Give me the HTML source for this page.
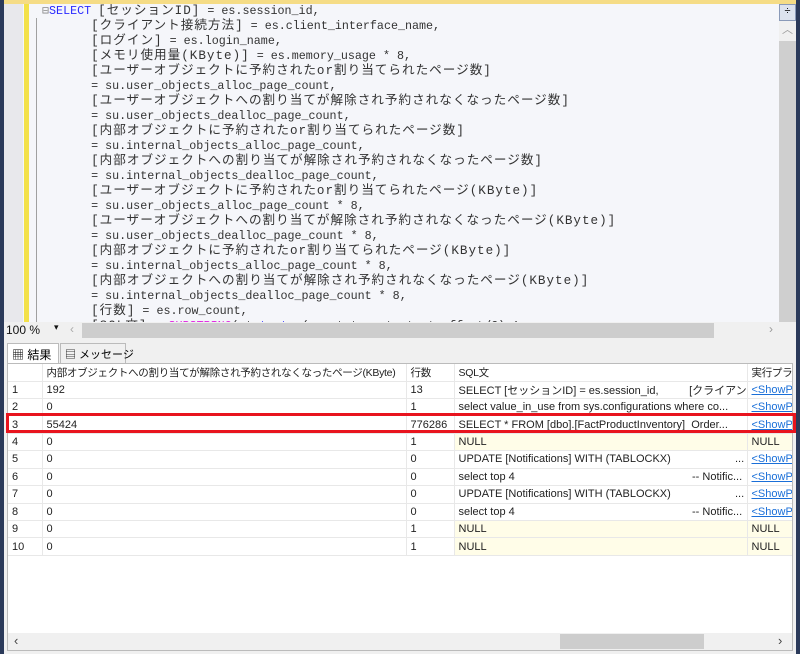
<!DOCTYPE html>
<html><head><meta charset="utf-8"><style>
*{margin:0;padding:0;box-sizing:border-box}
body{width:800px;height:654px;overflow:hidden;background:#2b3a5a;position:relative;font-family:"Liberation Sans","Noto Sans CJK JP",sans-serif}
.ed{position:absolute;left:4px;top:0;width:792px;height:322px;background:#f5f6fa;border-top:4px solid #f5dc86;overflow:hidden}
.gut{position:absolute;left:0;top:0;width:19px;height:318px;background:#e8e8ec}
.ybar{position:absolute;left:20px;top:0;width:5px;height:318px;background:#f3e14a}
.vl{position:absolute;left:32px;top:14px;width:1px;height:304px;background:#a0a0a0}
.code{position:absolute;left:38px;top:0px;font-family:"Liberation Mono","Noto Sans CJK JP",monospace;font-size:11.7px;line-height:15px;color:#333;white-space:pre}
.ln{display:block;height:15px;line-height:15px;overflow:visible}
.j{display:inline-block;height:15px;line-height:15px;vertical-align:top;font-size:12.6px;letter-spacing:1px}
.kw{color:#2a2aff}.fn{color:#e020e0}
.vs{position:absolute;left:775px;top:0;width:17px;height:318px;background:#cfcfcf}
.zoom{position:absolute;left:4px;top:322px;width:792px;height:17px;background:#f0f0f0;font-size:12px;color:#111}
.res{position:absolute;left:4px;top:339px;width:792px;height:315px;background:#f0f0f0}
.tab{position:absolute;top:4px;height:20px;font-size:12px;padding:2px 4px;border:1px solid #bbb;border-bottom:none;background:#fff;white-space:nowrap}
.grid{position:absolute;left:3px;top:24px;width:786px;height:288px;background:#fff;border:1px solid #bbb;overflow:hidden}
table{border-collapse:collapse;font-size:11px;color:#222;table-layout:fixed;position:absolute;left:0;top:0;width:784px}
td{height:17.45px;border-right:1px solid #e8e8e8;border-bottom:1px solid #e8e8e8;padding:0 4px;white-space:nowrap;overflow:hidden}
tr.h td{height:17px;font-size:10.5px;letter-spacing:-0.3px}
.y{background:#fffde8}
.lk{color:#1a6fd8;text-decoration:underline}
.red{position:absolute;left:6px;top:413px;width:790px;height:20px;border:3px solid #e8141e}
</style></head><body>
<div class="ed">
<div class="gut"></div><div class="ybar"></div><div class="vl"></div>
<div class="code"><span class="ln"><span style="color:#888">⊟</span><span class="kw">SELECT</span> <span class="j">[セッションID]</span> = es.session_id,</span><span class="ln">       <span class="j">[クライアント接続方法]</span> = es.client_interface_name,</span><span class="ln">       <span class="j">[ログイン]</span> = es.login_name,</span><span class="ln">       <span class="j">[メモリ使用量(KByte)]</span> = es.memory_usage * 8,</span><span class="ln">       <span class="j">[ユーザーオブジェクトに予約されたor割り当てられたページ数]</span></span><span class="ln">       = su.user_objects_alloc_page_count,</span><span class="ln">       <span class="j">[ユーザーオブジェクトへの割り当てが解除され予約されなくなったページ数]</span></span><span class="ln">       = su.user_objects_dealloc_page_count,</span><span class="ln">       <span class="j">[内部オブジェクトに予約されたor割り当てられたページ数]</span></span><span class="ln">       = su.internal_objects_alloc_page_count,</span><span class="ln">       <span class="j">[内部オブジェクトへの割り当てが解除され予約されなくなったページ数]</span></span><span class="ln">       = su.internal_objects_dealloc_page_count,</span><span class="ln">       <span class="j">[ユーザーオブジェクトに予約されたor割り当てられたページ(KByte)]</span></span><span class="ln">       = su.user_objects_alloc_page_count * 8,</span><span class="ln">       <span class="j">[ユーザーオブジェクトへの割り当てが解除され予約されなくなったページ(KByte)]</span></span><span class="ln">       = su.user_objects_dealloc_page_count * 8,</span><span class="ln">       <span class="j">[内部オブジェクトに予約されたor割り当てられたページ(KByte)]</span></span><span class="ln">       = su.internal_objects_alloc_page_count * 8,</span><span class="ln">       <span class="j">[内部オブジェクトへの割り当てが解除され予約されなくなったページ(KByte)]</span></span><span class="ln">       = su.internal_objects_dealloc_page_count * 8,</span><span class="ln">       <span class="j">[行数]</span> = es.row_count,</span><span class="ln">       <span class="j">[SQL文]</span> = <span class="fn">SUBSTRING</span>(st.<span class="kw">text</span>, (qs.statement_start_offset/2)+1</span></div>
<div class="vs"><div style="height:17px;background:#dde3ee;border:1px solid #8a9ab8;font-size:11px;text-align:center">÷</div><div style="height:20px;background:#f0f0f0;color:#999;text-align:center;font-size:11px">︿</div></div>
</div>
<div class="zoom"><span style="position:absolute;left:2px;top:1px">100 %</span><span style="position:absolute;left:50px;top:0;font-size:9px">▾</span><span style="position:absolute;left:66px;top:0;color:#aaa">‹</span><div style="position:absolute;left:78px;top:1px;width:632px;height:15px;background:#cdcdcd"></div><span style="position:absolute;left:765px;top:0;color:#999">›</span></div>
<div class="res">
<div class="tab" style="left:3px;width:52px">▦ 結果</div>
<div class="tab" style="left:56px;width:66px;background:#f0f0f0;font-size:11px">▤ メッセージ</div>
<div class="grid">
<table>
<colgroup><col style="width:34px"><col style="width:364px"><col style="width:48px"><col style="width:293px"><col style="width:45px"></colgroup>
<tr class="h"><td></td><td>内部オブジェクトへの割り当てが解除され予約されなくなったページ(KByte)</td><td>行数</td><td>SQL文</td><td>実行プラン</td></tr>
<tr><td>1</td><td>192</td><td>13</td><td>SELECT [セッションID] = es.session_id,&nbsp;&nbsp;&nbsp;&nbsp;&nbsp;&nbsp;&nbsp;&nbsp;&nbsp;&nbsp;[クライアン...</td><td class="lk">&lt;ShowP</td></tr>
<tr><td>2</td><td>0</td><td>1</td><td>select value_in_use from sys.configurations where co...</td><td class="lk">&lt;ShowP</td></tr>
<tr><td>3</td><td>55424</td><td>776286</td><td>SELECT * FROM [dbo].[FactProductInventory]&nbsp; Order...</td><td class="lk">&lt;ShowP</td></tr>
<tr><td>4</td><td>0</td><td>1</td><td class="y">NULL</td><td class="y">NULL</td></tr>
<tr><td>5</td><td>0</td><td>0</td><td>UPDATE [Notifications] WITH (TABLOCKX)&nbsp;&nbsp;&nbsp;&nbsp;&nbsp;&nbsp;&nbsp;&nbsp;&nbsp;&nbsp;&nbsp;&nbsp;&nbsp;&nbsp;&nbsp;&nbsp;&nbsp;&nbsp;&nbsp;&nbsp;&nbsp;...</td><td class="lk">&lt;ShowP</td></tr>
<tr><td>6</td><td>0</td><td>0</td><td>select top 4&nbsp;&nbsp;&nbsp;&nbsp;&nbsp;&nbsp;&nbsp;&nbsp;&nbsp;&nbsp;&nbsp;&nbsp;&nbsp;&nbsp;&nbsp;&nbsp;&nbsp;&nbsp;&nbsp;&nbsp;&nbsp;&nbsp;&nbsp;&nbsp;&nbsp;&nbsp;&nbsp;&nbsp;&nbsp;&nbsp;&nbsp;&nbsp;&nbsp;&nbsp;&nbsp;&nbsp;&nbsp;&nbsp;&nbsp;&nbsp;&nbsp;&nbsp;&nbsp;&nbsp;&nbsp;&nbsp;&nbsp;&nbsp;&nbsp;&nbsp;&nbsp;&nbsp;&nbsp;&nbsp;&nbsp;&nbsp;&nbsp;&nbsp;-- Notific...</td><td class="lk">&lt;ShowP</td></tr>
<tr><td>7</td><td>0</td><td>0</td><td>UPDATE [Notifications] WITH (TABLOCKX)&nbsp;&nbsp;&nbsp;&nbsp;&nbsp;&nbsp;&nbsp;&nbsp;&nbsp;&nbsp;&nbsp;&nbsp;&nbsp;&nbsp;&nbsp;&nbsp;&nbsp;&nbsp;&nbsp;&nbsp;&nbsp;...</td><td class="lk">&lt;ShowP</td></tr>
<tr><td>8</td><td>0</td><td>0</td><td>select top 4&nbsp;&nbsp;&nbsp;&nbsp;&nbsp;&nbsp;&nbsp;&nbsp;&nbsp;&nbsp;&nbsp;&nbsp;&nbsp;&nbsp;&nbsp;&nbsp;&nbsp;&nbsp;&nbsp;&nbsp;&nbsp;&nbsp;&nbsp;&nbsp;&nbsp;&nbsp;&nbsp;&nbsp;&nbsp;&nbsp;&nbsp;&nbsp;&nbsp;&nbsp;&nbsp;&nbsp;&nbsp;&nbsp;&nbsp;&nbsp;&nbsp;&nbsp;&nbsp;&nbsp;&nbsp;&nbsp;&nbsp;&nbsp;&nbsp;&nbsp;&nbsp;&nbsp;&nbsp;&nbsp;&nbsp;&nbsp;&nbsp;&nbsp;-- Notific...</td><td class="lk">&lt;ShowP</td></tr>
<tr><td>9</td><td>0</td><td>1</td><td class="y">NULL</td><td class="y">NULL</td></tr>
<tr><td>10</td><td>0</td><td>1</td><td class="y">NULL</td><td class="y">NULL</td></tr>
</table>
<div style="position:absolute;left:0;bottom:0;width:784px;height:17px;background:#f0f0f0"><span style="position:absolute;left:6px;top:0;font-size:13px;color:#444">‹</span><div style="position:absolute;left:552px;top:1px;width:144px;height:15px;background:#cdcdcd"></div><span style="position:absolute;left:770px;top:0;font-size:13px;color:#444">›</span></div>
</div>
</div>
<div class="red"></div>
</body></html>
